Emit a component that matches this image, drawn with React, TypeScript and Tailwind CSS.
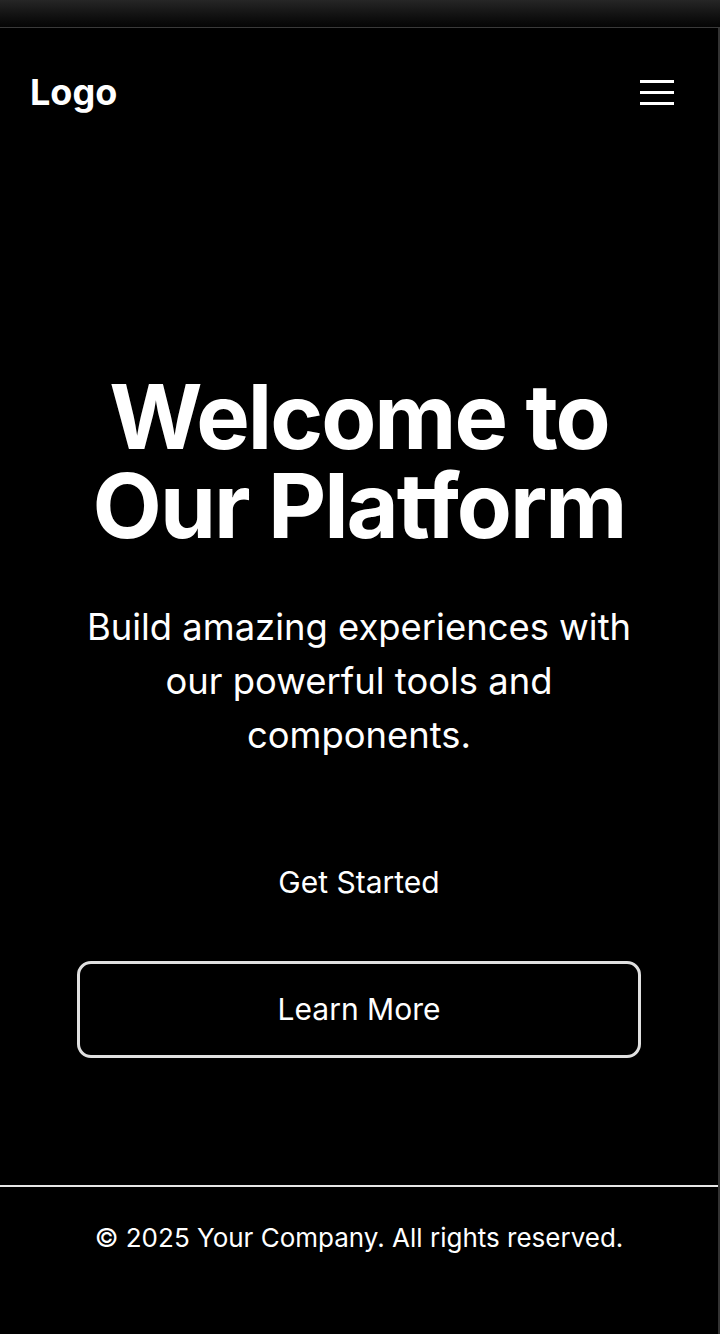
import React from "react";

const App = () => {
  return (
    <div className="min-h-[1334px] w-[720px] bg-black text-white font-['Inter','Liberation_Sans',sans-serif]">
      <div className="h-[28px] border-b border-[#3a3a3a] bg-gradient-to-b from-[#262626] to-[#050505]" />
      <div className="flex min-h-[1306px] flex-col border-r-2 border-[#333333]">
        <header className="flex items-center justify-between py-[40px] pl-[30px] pr-[44px]">
          <div className="h-12 text-[36px] font-bold leading-[48px]">Logo</div>
          <button className="flex w-[34px] flex-col gap-[8px]">
            <span className="h-[3px] w-full bg-white" />
            <span className="h-[3px] w-full bg-white" />
            <span className="h-[3px] w-full bg-white" />
          </button>
        </header>

        <main className="flex flex-col items-center px-[77px] pb-[127px] text-center">
          <h1 className="mt-[216px] text-[90px] font-bold leading-[89px] tracking-[-2px]">
            Welcome to
            <br />
            Our Platform
          </h1>
          <p className="mt-[50px] w-[580px] text-[36.4px] leading-[54px]">
            Build amazing experiences with our powerful tools and components.
          </p>
          <button className="mt-[72px] h-[97px] w-full rounded-[14px] bg-black text-[30px]">
            Get Started
          </button>
          <button className="mt-[30px] h-[97px] w-full rounded-[14px] border-[3px] border-[#e0e0e0] text-[30px]">
            Learn More
          </button>
        </main>

        <footer className="flex-1 border-t-2 border-[#e6e6e6] pt-[31px] text-center text-[26px] leading-[39px]">
          © 2025 Your Company. All rights reserved.
        </footer>
      </div>
    </div>
  );
};

export default App;
